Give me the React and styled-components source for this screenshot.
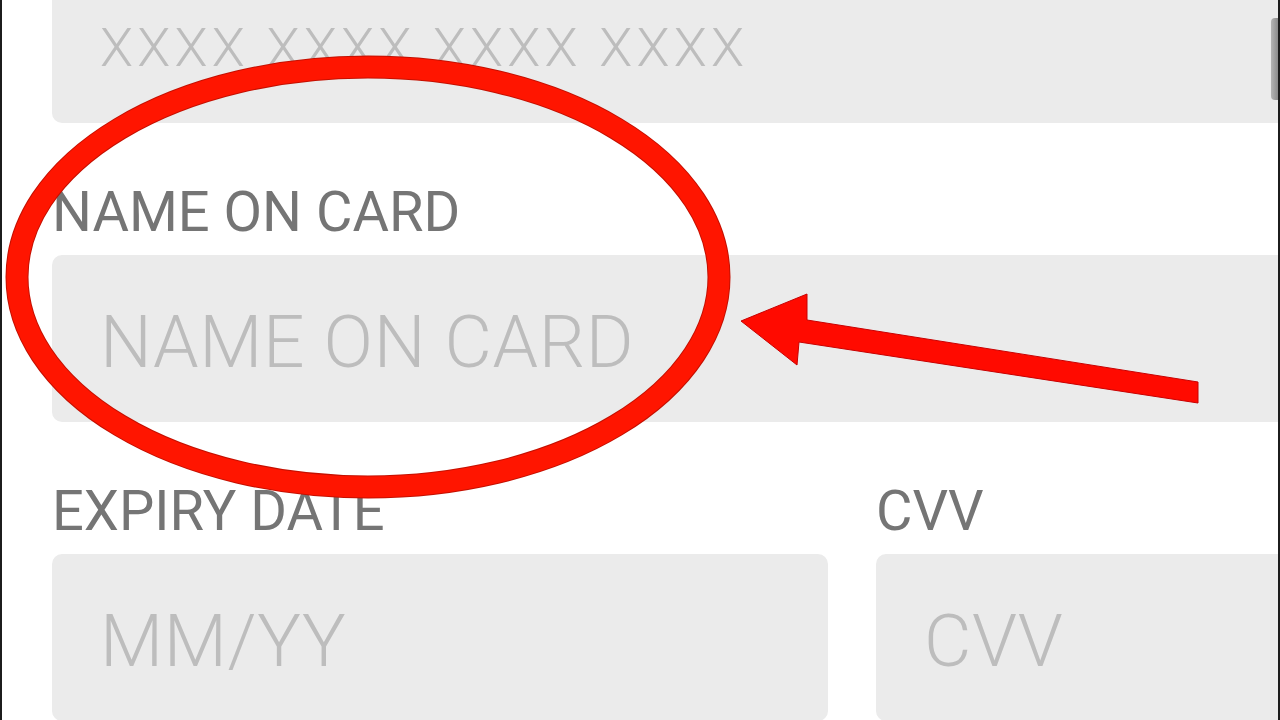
import styled, { createGlobalStyle } from 'styled-components'

const GlobalStyle = createGlobalStyle`
  body {
    margin: 0;
    background: #ffffff;
    font-family: Roboto, "Noto Sans", sans-serif;
  }
`

const Screen = styled.div`
  position: relative;
  width: 1280px;
  height: 720px;
  overflow: hidden;
  box-sizing: border-box;
  background: #ffffff;
  border-left: 2px solid #1c1c1c;
  border-right: 2px solid #1c1c1c;
`

const Form = styled.form`
  width: 1400px;
  margin-top: -44px;
  padding-left: 50px;
  box-sizing: border-box;
  display: flex;
  flex-direction: column;
`

const Field = styled.div`
  display: flex;
  flex-direction: column;
  min-width: 0;
`

const Label = styled.label`
  margin-top: 61px;
  margin-bottom: 15px;
  font-size: 56px;
  line-height: 56px;
  color: #757575;
  white-space: nowrap;
`

const Input = styled.input`
  width: 100%;
  height: 167px;
  box-sizing: border-box;
  border: none;
  outline: none;
  border-radius: 10px;
  background: #ebebeb;
  padding: ${(p) => p.$offset || 6}px 0 0 48px;
  font-family: Roboto, "Noto Sans", sans-serif;
  font-size: ${(p) => p.$size || 73}px;
  font-weight: 300;
  letter-spacing: ${(p) => p.$spacing || 0.6}px;
  color: #555;

  &::placeholder {
    color: #bdbdbd;
  }
`

const Row = styled.div`
  display: grid;
  grid-template-columns: 776px 1fr;
  column-gap: 48px;
`

const Scrollbar = styled.div`
  position: absolute;
  top: 18px;
  right: 0;
  width: 7px;
  height: 82px;
  border-radius: 4px 0 0 4px;
  background: linear-gradient(90deg, #b5b5b5, #8c8c8c);
`

const Annotation = styled.svg`
  position: absolute;
  inset: 0;
  width: 1280px;
  height: 720px;
  pointer-events: none;
`

export default function App() {
  return (
    <>
      <GlobalStyle />
      <Screen>
        <Form onSubmit={(e) => e.preventDefault()}>
          <Field>
            <Input placeholder="XXXX XXXX XXXX XXXX" $size={54} $spacing={4.2} $offset={16} />
          </Field>
          <Field>
            <Label>NAME ON CARD</Label>
            <Input placeholder="NAME ON CARD" />
          </Field>
          <Row>
            <Field>
              <Label>EXPIRY DATE</Label>
              <Input placeholder="MM/YY" />
            </Field>
            <Field>
              <Label>CVV</Label>
              <Input placeholder="CVV" />
            </Field>
          </Row>
        </Form>
        <Scrollbar />
        <Annotation viewBox="0 0 1280 720">
          <ellipse cx="366" cy="277" rx="351" ry="210" fill="none" stroke="#c41000" strokeWidth="23" />
          <ellipse cx="366" cy="277" rx="351" ry="210" fill="none" stroke="#ff1500" strokeWidth="21" />
          <polygon
            points="739,321 805,294 805,320 1196,382 1196,403 797,342 795,365"
            fill="#ff0a00"
            stroke="#c80000"
            strokeWidth="1"
            strokeLinejoin="miter"
          />
        </Annotation>
      </Screen>
    </>
  )
}
